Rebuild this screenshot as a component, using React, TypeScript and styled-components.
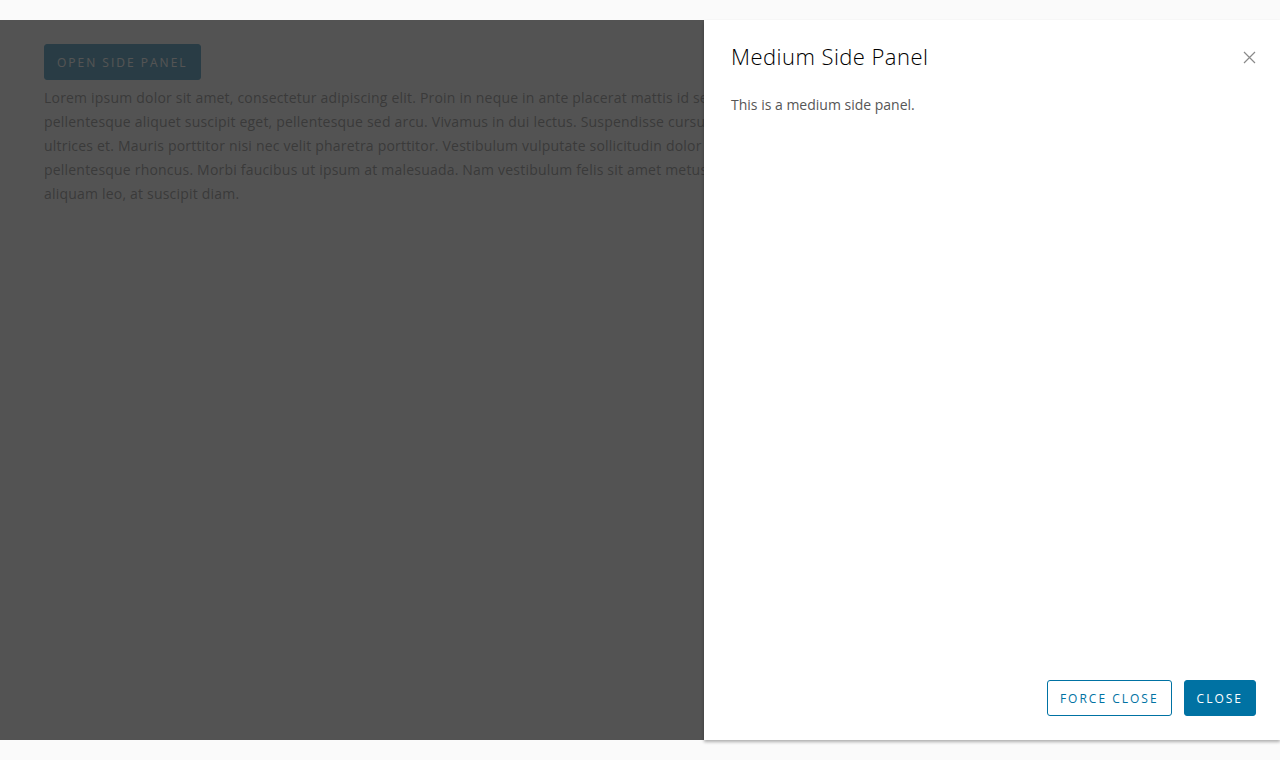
import React from 'react';
import styled, { createGlobalStyle } from 'styled-components';

const GlobalStyle = createGlobalStyle`
  body {
    margin: 0;
    background: #fafafa;
    font-family: "Open Sans", "Liberation Sans", sans-serif;
  }
`;

// Page frame: light strip above and below the demo host
const Stage = styled.div`
  height: 760px;
  padding: 20px 0;
  box-sizing: border-box;
`;

const Host = styled.div`
  position: relative;
  height: 720px;
  padding: 24px 44px;
  box-sizing: border-box;
`;

const Button = styled.button<{ $outline?: boolean }>`
  height: 36px;
  padding: 0 12px;
  border-radius: 3px;
  border: 1px solid #0072a3;
  background: ${(p) => (p.$outline ? '#fff' : '#0072a3')};
  color: ${(p) => (p.$outline ? '#0072a3' : '#fff')};
  font-family: "Open Sans", "Liberation Sans", sans-serif;
  font-size: 12px;
  font-weight: 500;
  letter-spacing: 2px;
  text-transform: uppercase;
  cursor: pointer;
`;

// the panel sits over the right part of this text, so it is clipped there
const Lorem = styled.p`
  margin: 6px 0 0;
  width: 660px;
  overflow: hidden;
  font-size: 14px;
  line-height: 24px;
  letter-spacing: 0.2px;
  color: #666;
  white-space: nowrap;

  span {
    display: block;
  }
`;

const Backdrop = styled.div`
  position: absolute;
  inset: 0;
  background: rgba(49, 49, 49, 0.83);
`;

const Panel = styled.aside`
  position: absolute;
  top: 0;
  right: 0;
  bottom: 0;
  width: 576px;
  background: #fff;
  box-shadow: 0 2px 3px rgba(0, 0, 0, 0.3);
  display: flex;
  flex-direction: column;
  padding: 24px 24px 24px 27px;
  box-sizing: border-box;
`;

const PanelHeader = styled.div`
  display: flex;
  align-items: center;
  justify-content: space-between;
`;

const Title = styled.h3`
  margin: 0;
  font-size: 22px;
  line-height: 25px;
  font-weight: 300;
  letter-spacing: 0.45px;
  color: #000;
`;

const CloseIcon = styled.button`
  border: none;
  background: none;
  padding: 0;
  width: 14px;
  height: 14px;
  display: flex;
  align-items: center;
  justify-content: center;
  cursor: pointer;
`;

const PanelBody = styled.div`
  flex: 1;
  padding-top: 24px;
  font-size: 14px;
  line-height: 24px;
  color: #565656;
`;

const PanelFooter = styled.div`
  display: flex;
  justify-content: flex-end;
  gap: 12px;
`;

const loremLines = [
  'Lorem ipsum dolor sit amet, consectetur adipiscing elit. Proin in neque in ante placerat mattis id sed quam. Proin rhoncus lacus et tempor dignissim. Vivamus sem quam,',
  'pellentesque aliquet suscipit eget, pellentesque sed arcu. Vivamus in dui lectus. Suspendisse cursus est ac nisl imperdiet viverra. Aenean sagittis nibh lacus, in eleifend urna',
  'ultrices et. Mauris porttitor nisi nec velit pharetra porttitor. Vestibulum vulputate sollicitudin dolor ut tincidunt. Phasellus vitae blandit felis. Nullam posuere ipsum tincidunt velit',
  'pellentesque rhoncus. Morbi faucibus ut ipsum at malesuada. Nam vestibulum felis sit amet metus finibus hendrerit. Fusce faucibus odio eget ex vulputate rhoncus. Fusce nec',
  'aliquam leo, at suscipit diam.',
];

const App: React.FC = () => {
  return (
    <Stage>
      <GlobalStyle />
      <Host>
        <Button>Open side panel</Button>
        <Lorem>
          {loremLines.map((line, i) => (
            <span key={i}>{line}</span>
          ))}
        </Lorem>
        <Backdrop />
        <Panel>
          <PanelHeader>
            <Title>Medium Side Panel</Title>
            <CloseIcon aria-label="Close">
              <svg width="14" height="14" viewBox="0 0 14 14">
                <path d="M2 2 L13 13 M13 2 L2 13" stroke="#8a8a8a" strokeWidth="1.2" fill="none" />
              </svg>
            </CloseIcon>
          </PanelHeader>
          <PanelBody>This is a medium side panel.</PanelBody>
          <PanelFooter>
            <Button $outline>Force close</Button>
            <Button>Close</Button>
          </PanelFooter>
        </Panel>
      </Host>
    </Stage>
  );
};

export default App;
